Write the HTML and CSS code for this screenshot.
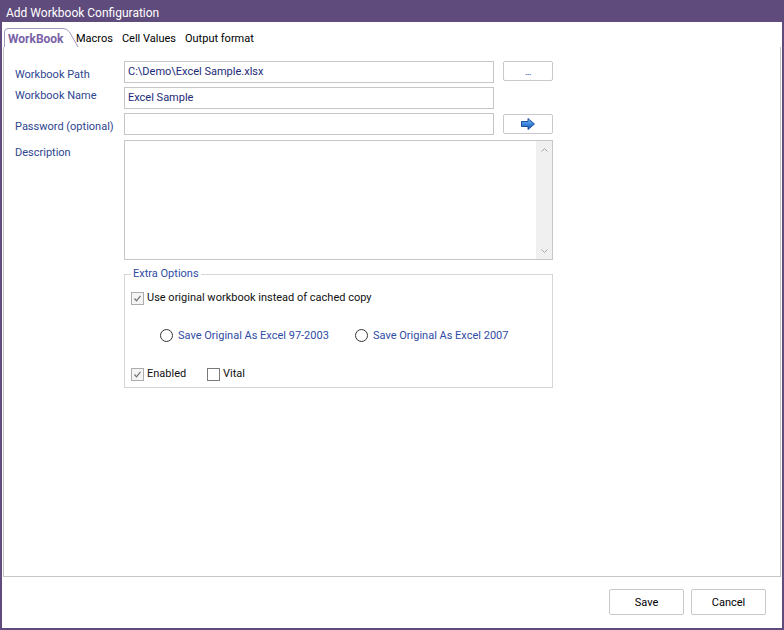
FILE: index.html
```html
<!DOCTYPE html>
<html lang="en">
<head>
    <meta charset="UTF-8">
    <title>Add Workbook Configuration</title>
    <link rel="stylesheet" href="styles.css">
</head>
<body>
    <div class="window">
        <div class="titlebar">Add Workbook Configuration</div>

        <div class="tabs">
            <span class="tab active">
                <svg class="tab-shape" width="78" height="19" viewBox="0 0 78 19">
                    <path d="M1.5,19 V4 Q1.5,0.5 5,0.5 H60 Q64,0.5 66.5,4 L75,19" fill="#fff" stroke="#a497bf"/>
                </svg>
                <span class="tab-label">WorkBook</span>
            </span>
            <span class="tab">Macros</span>
            <span class="tab">Cell Values</span>
            <span class="tab">Output format</span>
        </div>

        <div class="panel">
            <div class="form-grid">
                <div class="label">Workbook Path</div>
                <div class="field">C:\Demo\Excel Sample.xlsx</div>
                <button class="small-btn dots">...</button>

                <div class="label label-up">Workbook Name</div>
                <div class="field">Excel Sample</div>
                <div></div>

                <div class="label">Password (optional)</div>
                <div class="field"></div>
                <button class="small-btn arrow-btn">
                    <svg width="14" height="12" viewBox="0 0 14 12">
                        <defs>
                            <linearGradient id="arrowFill" x1="0" y1="0" x2="0" y2="1">
                                <stop offset="0" stop-color="#8cc4f7"/>
                                <stop offset="0.5" stop-color="#3d86de"/>
                                <stop offset="1" stop-color="#1c56b0"/>
                            </linearGradient>
                        </defs>
                        <path d="M0.5,3.5 H7 V0.5 L13.5,6 L7,11.5 V8.5 H0.5 Z" fill="url(#arrowFill)" stroke="#1d4f9c" stroke-width="1"/>
                    </svg>
                </button>

                <div class="label">Description</div>
                <div class="textarea">
                    <div class="textarea-body"></div>
                    <div class="scrollbar">
                        <svg width="7" height="4" viewBox="0 0 7 4"><path d="M0.5,3.5 L3.5,0.5 L6.5,3.5" fill="none" stroke="#a6a6a6"/></svg>
                        <svg width="7" height="4" viewBox="0 0 7 4"><path d="M0.5,0.5 L3.5,3.5 L6.5,0.5" fill="none" stroke="#a6a6a6"/></svg>
                    </div>
                </div>
            </div>

            <fieldset class="options">
                <legend>Extra Options</legend>

                <div class="opt-row">
                    <span class="check checked">
                        <svg width="11" height="11" viewBox="0 0 11 11"><path d="M2.5,5.5 L4.5,7.8 L8.5,2.8" fill="none" stroke="#6f6f6f" stroke-width="1.2"/></svg>
                    </span>
                    <span class="opt-text">Use original workbook instead of cached copy</span>
                </div>

                <div class="opt-row radios">
                    <div class="radio-item first">
                        <span class="radio"></span>
                        <span class="radio-text">Save Original As Excel 97-2003</span>
                    </div>
                    <div class="radio-item">
                        <span class="radio"></span>
                        <span class="radio-text">Save Original As Excel 2007</span>
                    </div>
                </div>

                <div class="opt-row last">
                    <div class="check-item first">
                        <span class="check checked">
                            <svg width="11" height="11" viewBox="0 0 11 11"><path d="M2.5,5.5 L4.5,7.8 L8.5,2.8" fill="none" stroke="#6f6f6f" stroke-width="1.2"/></svg>
                        </span>
                        <span class="opt-text">Enabled</span>
                    </div>
                    <div class="check-item">
                        <span class="check"></span>
                        <span class="opt-text">Vital</span>
                    </div>
                </div>
            </fieldset>
        </div>

        <div class="footer">
            <button class="btn">Save</button>
            <button class="btn">Cancel</button>
        </div>
    </div>
</body>
</html>
```

FILE: styles.css
```css
:root {
    --color-frame: #604b7d;
    --color-label: #2e4590;
    --color-value: #1c2a78;
    --color-link: #2f4ca6;
    --color-border: #c6c6c6;
}

* {
    box-sizing: border-box;
}

body {
    margin: 0;
    background: #fff;
    font-family: Roboto, "Noto Sans", sans-serif;
    font-size: 11px;
    color: #000;
}

.window {
    width: 784px;
    height: 630px;
    border: 2px solid var(--color-frame);
    border-top: 0;
    display: flex;
    flex-direction: column;
}

.titlebar {
    flex: none;
    height: 22px;
    margin: 0 -2px;
    padding: 4px 0 0 6px;
    background: var(--color-frame);
    color: #fff;
    font-size: 12px;
    line-height: 18px;
}

/* tab strip */
.tabs {
    flex: none;
    height: 25px;
    padding-left: 1px;
    display: flex;
    align-items: flex-end;
}

.tab {
    line-height: 16px;
    margin-right: 9px;
    white-space: nowrap;
}

.tab.active {
    position: relative;
    width: 73px;
    margin-right: 0;
    padding-left: 5px;
    font-size: 12px;
    font-weight: bold;
    color: #7a62a8;
}

.tab-shape {
    position: absolute;
    left: 0;
    top: -3px;
}

.tab-label {
    position: relative;
}

/* panel */
.panel {
    flex: none;
    height: 530px;
    margin: 0 1px;
    padding: 14px 0 0 11px;
    border: 1px solid var(--color-border);
    border-top: 0;
}

.form-grid {
    display: grid;
    grid-template-columns: 109px 370px 59px;
    grid-template-rows: 22px 22px 22px 121px;
    row-gap: 4px;
}

.label {
    padding-top: 6px;
    line-height: 16px;
    color: var(--color-label);
    white-space: nowrap;
}

.label.label-up {
    padding-top: 1px;
}

.field {
    height: 22px;
    padding-left: 3px;
    border: 1px solid var(--color-border);
    line-height: 20px;
    color: var(--color-value);
}

.small-btn {
    justify-self: end;
    align-self: start;
    width: 50px;
    height: 20px;
    padding: 0;
    border: 1px solid #c9c9c9;
    border-radius: 2px;
    background: #fff;
    display: flex;
    align-items: center;
    justify-content: center;
}

.small-btn.dots {
    font-family: inherit;
    font-size: 8px;
    font-weight: bold;
    color: #1f66b8;
    letter-spacing: -0.5px;
    line-height: 8px;
    padding-top: 3px;
}

.small-btn.arrow-btn {
    margin-top: 1px;
}

.textarea {
    grid-column: 2 / 4;
    align-self: end;
    height: 120px;
    border: 1px solid var(--color-border);
    display: flex;
}

.textarea-body {
    flex: 1;
}

.scrollbar {
    width: 16px;
    padding: 7px 0 6px;
    background: #f0f0f0;
    display: flex;
    flex-direction: column;
    align-items: center;
    justify-content: space-between;
}

/* extra options group */
.options {
    width: 429px;
    min-width: 0;
    margin: 6px 0 0 109px;
    padding: 8px 6px 5px;
    border: 1px solid #d6d6d6;
}

.options legend {
    padding: 0 2px;
    line-height: 16px;
    color: var(--color-link);
}

.opt-row {
    height: 16px;
    display: flex;
    align-items: center;
}

.opt-row.radios {
    margin-top: 21px;
    padding-left: 29px;
}

.opt-row.last {
    margin-top: 23px;
}

.check {
    flex: none;
    width: 13px;
    height: 13px;
    border: 1px solid #7a7a7a;
    background: #fff;
    display: flex;
    align-items: center;
    justify-content: center;
}

.check.checked {
    border-color: #acacac;
    background: #f4f4f4;
}

.opt-text {
    margin-left: 3px;
    line-height: 16px;
    color: #111;
    white-space: nowrap;
}

.check-item,
.radio-item {
    display: flex;
    align-items: center;
}

.check-item.first {
    width: 76px;
}

.radio-item.first {
    width: 195px;
}

.radio {
    flex: none;
    width: 13px;
    height: 13px;
    border: 1px solid #333;
    border-radius: 50%;
    background: #fff;
}

.radio-text {
    margin-left: 5px;
    color: var(--color-link);
    white-space: nowrap;
}

/* dialog buttons */
.footer {
    flex: 1;
    padding: 12px 16px 0 0;
    display: flex;
    justify-content: flex-end;
    align-items: flex-start;
    gap: 7px;
}

.btn {
    width: 75px;
    height: 26px;
    padding: 0;
    border: 1px solid #c9c9c9;
    border-radius: 2px;
    background: #fff;
    font-family: inherit;
    font-size: 11px;
    color: #000;
}
```
